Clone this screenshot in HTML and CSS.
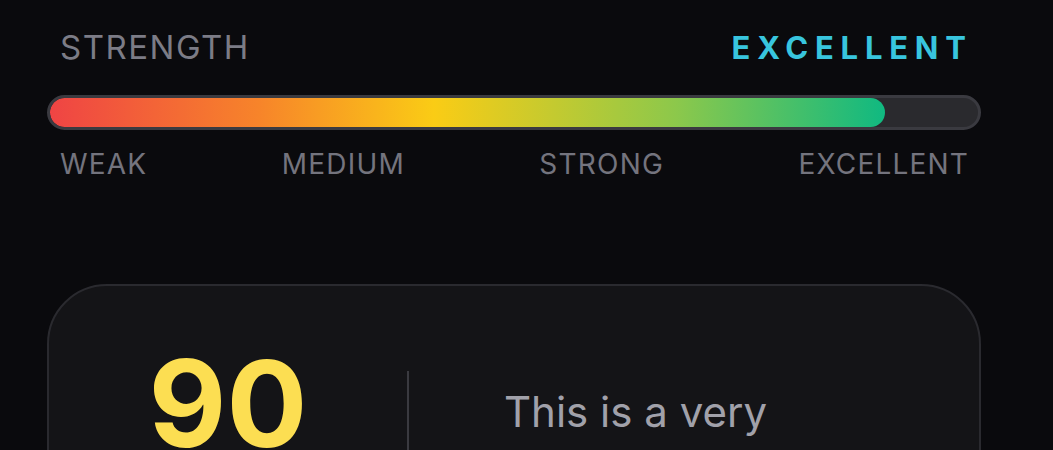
FILE: index.html
```html
<!DOCTYPE html>
<html lang="en">
<head>
    <meta charset="UTF-8">
    <meta name="viewport" content="width=device-width, initial-scale=1.0">
    <title>Password strength</title>
    <link rel="stylesheet" href="styles.css">
</head>
<body>
    <div class="meter">
        <!-- header -->
        <div class="meter-head">
            <span class="meter-title">STRENGTH</span>
            <span class="meter-level">EXCELLENT</span>
        </div>

        <!-- bar -->
        <div class="meter-track">
            <div class="meter-fill" style="width: 90%"></div>
        </div>

        <div class="meter-scale">
            <span>WEAK</span>
            <span>MEDIUM</span>
            <span>STRONG</span>
            <span>EXCELLENT</span>
        </div>

        <!-- score card -->
        <div class="score-card">
            <div class="score-num">90</div>
            <div class="score-divider"></div>
            <p class="score-text">This is a very strong password.</p>
        </div>
    </div>
</body>
</html>
```

FILE: styles.css
```css
* {
    margin: 0;
    padding: 0;
    box-sizing: border-box;
}

body {
    background: #0a0a0d;
    font-family: 'Inter', 'Noto Sans', sans-serif;
    height: 100vh;
    overflow: hidden;
}

.meter {
    width: 934px;
    margin-left: 47px;
    padding-top: 28px;
}

.meter-head {
    display: flex;
    justify-content: space-between;
    align-items: center;
    padding: 0 15px 0 13px;
    height: 38px;
}

.meter-title {
    font-size: 33px;
    letter-spacing: 1.5px;
    margin-right: -1.5px;
    color: #7c7c86;
}

.meter-level {
    font-size: 31px;
    font-weight: 700;
    color: #38c5de;
    letter-spacing: 6.8px;
    margin-right: -6.8px;
}

.meter-track {
    margin-top: 29px;
    height: 35px;
    border: 3px solid #3a3a40;
    border-radius: 18px;
    background: #2a2a2e;
    overflow: hidden;
}

.meter-fill {
    height: 100%;
    border-radius: 15px;
    background: linear-gradient(to right, #ef4444, #f7842a 25%, #facc15 46%, #8cc84b 75%, #10b981);
}

.meter-scale {
    display: flex;
    justify-content: space-between;
    padding: 0 13px 0 13px;
    margin-top: 17px;
    font-size: 28px;
    letter-spacing: 1.2px;
    color: #74747e;
}

.meter-scale span {
    margin-right: -1.2px;
}

.score-card {
    margin-top: 103px;
    height: 300px;
    border: 2px solid #2a2a2f;
    border-radius: 60px;
    background: #141417;
    display: flex;
    align-items: flex-start;
    padding-top: 58px;
}

.score-num {
    width: 358px;
    text-align: center;
    font-size: 120px;
    font-weight: 700;
    line-height: 1;
    color: #fcde52;
}

.score-divider {
    width: 2px;
    height: 200px;
    margin-top: 27px;
    background: #3a3a40;
}

.score-text {
    padding-left: 95px;
    padding-top: 39px;
    font-size: 42px;
    line-height: 1.4;
    color: #a1a1aa;
    width: 400px;
}
```
